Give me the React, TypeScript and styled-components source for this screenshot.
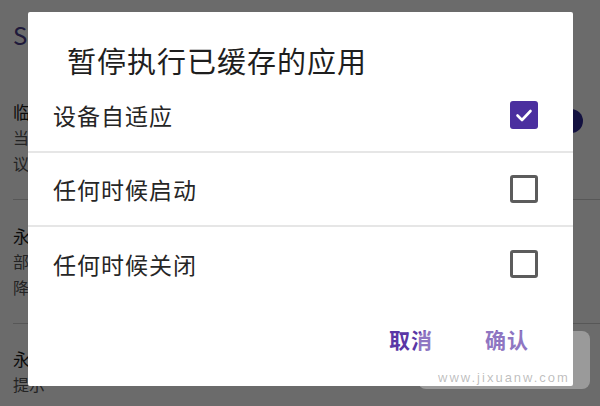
import React, {FC, useState} from "react";
import styled, {createGlobalStyle} from "styled-components";

const GlobalStyle = createGlobalStyle`
  html, body {
    margin: 0;
    padding: 0;
    background: #ffffff;
  }
  body {
    font-family: "Noto Sans CJK SC", "Noto Sans", sans-serif;
  }
`;

const Screen = styled.div`
  position: relative;
  width: 600px;
  height: 406px;
  overflow: hidden;
  background: #ffffff;
  display: flex;
  flex-direction: column;
`;

// settings page behind the dialog
const Page = styled.div`
  flex: 1;
  display: flex;
  flex-direction: column;
  padding: 0 0 0 13px;
`;

const PageTitle = styled.div`
  height: 76px;
  display: flex;
  align-items: center;
  padding-bottom: 8px;
  box-sizing: border-box;
  font-size: 24px;
  color: #4a3f8c;
`;

const SettingRow = styled.div<{ $short?: boolean }>`
  display: flex;
  align-items: ${p => (p.$short ? "flex-start" : "center")};
  justify-content: space-between;
  height: ${p => (p.$short ? 82 : 124)}px;
  box-sizing: border-box;
  border-bottom: ${p => (p.$short ? "none" : "1px solid #cfcfcf")};
  padding: ${p => (p.$short ? "24px 17px 0 0" : "0 17px 0 0")};
`;

const SettingText = styled.div`
  display: flex;
  flex-direction: column;
  gap: 4px;
`;

const SettingName = styled.div`
  font-size: 17px;
  line-height: 21px;
  color: #1c1c1c;
`;

const SettingDesc = styled.div`
  font-size: 16px;
  line-height: 22px;
  color: #555;
`;

const Thumb = styled.div`
  width: 24px;
  height: 24px;
  border-radius: 50%;
  background: #2f2a9a;
  margin-top: -34px;
`;

const NavBar = styled.div`
  height: 7px;
  background: #9a9a9a;
  border-top: 5px solid #e8e8e8;
`;

const Scrim = styled.div`
  position: absolute;
  inset: 0;
  background: rgba(0, 0, 0, 0.58);
`;

const Dialog = styled.div`
  position: absolute;
  left: 28px;
  top: 12px;
  width: 545px;
  height: 374px;
  background: #ffffff;
  border-radius: 2px;
  display: flex;
  flex-direction: column;
`;

const DialogTitle = styled.div`
  height: 67px;
  box-sizing: border-box;
  padding: 31px 0 0 39px;
  font-size: 29px;
  line-height: 34px;
  letter-spacing: 1px;
  color: #1e1e1e;
`;

const Option = styled.label<{ $last?: boolean }>`
  height: ${p => (p.$last ? 73 : 74)}px;
  box-sizing: border-box;
  display: flex;
  align-items: center;
  justify-content: space-between;
  padding: 0 35px 0 25px;
  border-bottom: ${p => (p.$last ? "none" : "2px solid #e6e6e6")};
  cursor: pointer;
`;

const OptionLabel = styled.span`
  font-size: 23px;
  letter-spacing: 1px;
  color: #262626;
`;

const Box = styled.span<{ $checked: boolean }>`
  width: 28px;
  height: 28px;
  box-sizing: border-box;
  border-radius: 3px;
  display: flex;
  align-items: center;
  justify-content: center;
  background: ${p => (p.$checked ? "#4b2f9f" : "transparent")};
  border: ${p => (p.$checked ? "none" : "3px solid #5c5c5c")};
`;

const Footer = styled.div`
  flex: 1;
  display: flex;
  justify-content: flex-end;
  align-items: center;
  gap: 52px;
  padding: 0 44px 8px 0;
`;

const TextButton = styled.button`
  border: none;
  background: transparent;
  padding: 0;
  font-family: inherit;
  font-size: 21px;
  font-weight: 700;
  letter-spacing: 1px;
  color: #5a36a6;
  cursor: pointer;
`;

const Watermark = styled.div`
  position: absolute;
  left: 418px;
  top: 331px;
  width: 172px;
  height: 58px;
  border-radius: 8px;
  background: rgba(255, 255, 255, 0.32);
  display: flex;
  flex-direction: column;
  align-items: center;
  justify-content: flex-end;
  padding-bottom: 4px;
  box-sizing: border-box;
`;

const WatermarkText = styled.span`
  font-family: "Liberation Sans", sans-serif;
  font-size: 13px;
  letter-spacing: 2px;
  color: rgba(110, 110, 110, 0.45);
`;

const Check: FC = () => (
  <svg width="20" height="20" viewBox="0 0 20 20">
    <path d="M3.5 10.5 L8 15 L16.5 6" fill="none" stroke="#ffffff" strokeWidth="2.6"
          strokeLinecap="round" strokeLinejoin="round"/>
  </svg>
);

const options = ["设备自适应", "任何时候启动", "任何时候关闭"];

const App: FC = () => {
  const [selected, setSelected] = useState<number>(0);

  return (
    <Screen>
      <GlobalStyle/>
      <Page>
        <PageTitle>Se</PageTitle>
        <SettingRow>
          <SettingText>
            <SettingName>临时</SettingName>
            <SettingDesc>当前</SettingDesc>
            <SettingDesc>议</SettingDesc>
          </SettingText>
          <Thumb/>
        </SettingRow>
        <SettingRow>
          <SettingText>
            <SettingName>永久</SettingName>
            <SettingDesc>部分</SettingDesc>
            <SettingDesc>降低</SettingDesc>
          </SettingText>
        </SettingRow>
        <SettingRow $short>
          <SettingText>
            <SettingName>永久</SettingName>
            <SettingDesc>提示</SettingDesc>
          </SettingText>
        </SettingRow>
      </Page>
      <NavBar/>
      <Scrim/>
      <Dialog>
        <DialogTitle>暂停执行已缓存的应用</DialogTitle>
        {options.map((opt, i) => (
          <Option key={opt} $last={i === options.length - 1} onClick={() => setSelected(i)}>
            <OptionLabel>{opt}</OptionLabel>
            <Box $checked={selected === i}>{selected === i && <Check/>}</Box>
          </Option>
        ))}
        <Footer>
          <TextButton>取消</TextButton>
          <TextButton>确认</TextButton>
        </Footer>
      </Dialog>
      <Watermark>
        <WatermarkText>www.jixuanw.com</WatermarkText>
      </Watermark>
    </Screen>
  );
};

export default App;
